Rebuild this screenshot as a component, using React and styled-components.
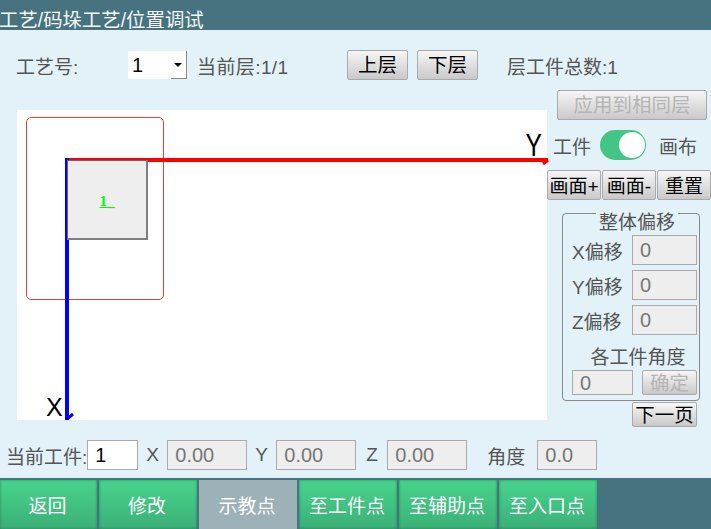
import React from "react";
import styled, { createGlobalStyle } from "styled-components";

const Global = createGlobalStyle`
  html, body { margin: 0; padding: 0; overflow: hidden; background: #e2f2f8; }
  * { box-sizing: border-box; }
  body { font-family: "Liberation Sans", "Noto Sans CJK SC", sans-serif; font-size: 19px; color: #555; }
`;

const Page = styled.div`
  width: 711px; height: 529px; display: flex; flex-direction: column; overflow: hidden;
  background: #e2f2f8;
`;
const Header = styled.header`
  height: 30px; flex: none; background: #47727f; color: #f2f7f8;
  font-size: 19.4px; line-height: 40px; text-indent: -1px; overflow: hidden; white-space: nowrap; margin-bottom: 20px;
`;
const TopRow = styled.div`
  height: 30px; flex: none; display: flex; align-items: center; padding-left: 16px; margin-bottom: 10px;
`;
const Text = styled.span`
  flex: none; white-space: nowrap; width: ${p => p.$w ? p.$w + "px" : "auto"}; margin-left: ${p => p.$ml || 0}px;
  letter-spacing: ${p => p.$ls || 0}px; color: #555;
`;
const Select = styled.div`
  width: 59px; height: 28px; background: #fff; color: #000; display: flex; justify-content: space-between;
  align-items: center; padding-left: 4px; font-size: 20px;
`;
const SelectArrow = styled.div`
  width: 16px; height: 28px; border-right: 1px solid #888; border-bottom: 1px solid #888;
  display: flex; align-items: center; justify-content: center; background: #fff;
  &::after { content: ""; border: 4px solid transparent; border-top: 4px solid #000; border-bottom: 0; margin-left: -1px; }
`;
const Btn = styled.button`
  flex: none; width: ${p => p.$w}px; height: ${p => p.$h || 30}px; margin-left: ${p => p.$ml || 0}px; padding: 2px 0 0;
  font: inherit; font-size: ${p => p.$fs || 19.5}px; line-height: 1; color: ${p => p.disabled ? "#b5b5b5" : "#000"};
  background: linear-gradient(#f6f6f6, #c9c9c9); border: 1px solid #aaa; border-radius: 2px; white-space: nowrap;
`;
const Work = styled.div`
  height: 337px; flex: none; display: flex; padding-left: 17px; margin-bottom: 13px;
`;
const Canvas = styled.div`
  position: relative; width: 530px; height: 310px; margin-top: 20px; background: #fff; flex: none;
`;
const Overlay = styled.svg`
  position: absolute; left: 0; top: 0; width: 540px; height: 310px; overflow: visible;
`;
const Range = styled.div`
  position: absolute; left: 9px; top: 7px; width: 138px; height: 183px; border: 1px solid #e8432e; border-radius: 5px;
`;
const Piece = styled.div`
  position: absolute; left: 50px; top: 50px; width: 81px; height: 80px; background: #eee; padding-top: 3px;
  border-left: 1px solid #666; border-top: 1px solid #666; border-right: 2px solid #808080; border-bottom: 2px solid #808080;
  display: flex; align-items: center; justify-content: center;
  color: #0f0; font: bold 15px "Liberation Serif", serif; text-decoration: underline;
`;
const Side = styled.aside`
  width: 164px; flex: none; display: flex; flex-direction: column;
`;
const SwitchRow = styled.div`
  height: 30px; margin: 10px 0; display: flex; align-items: center; padding-left: 6px;
`;
const Toggle = styled.div`
  width: 46px; height: 30px; border-radius: 15px; background: #43c585; margin: 0 13px 0 9px; padding: 2px 1px;
  display: flex; justify-content: flex-end;
  &::after { content: ""; width: 26px; height: 26px; border-radius: 50%; background: #fff; }
`;
const ViewRow = styled.div`
  display: flex; gap: 1px; height: 30px;
`;
const Group = styled.section`
  position: relative; flex: none; margin: 13px 0 0 15px; padding: 21px 2px 0 9px; width: 138px; height: 188px;
  border: 1px solid #888; border-radius: 4px; display: flex; flex-direction: column;
`;
const Legend = styled.div`
  position: absolute; left: 33px; top: -1px; padding: 0 3px; height: 19px; line-height: 19px;
  background: #e2f2f8; color: #555; white-space: nowrap;
`;
const OffsetRow = styled.div`
  display: flex; justify-content: space-between; align-items: center; height: 30px; margin-bottom: 5px;
`;
const Field = styled.div`
  flex: none; width: ${p => p.$w}px; height: ${p => p.$h || 30}px; background: ${p => p.$white ? "#fff" : "#eee"};
  border: 1px solid #aaa; color: ${p => p.$white ? "#000" : "#777"}; display: flex; align-items: center;
  padding: 1px 0 0 7px; font-size: 20px;
`;
const AngleTitle = styled.div`
  text-align: center; height: 25px; line-height: 25px; padding-left: 7px; margin-top: 5px;
`;
const AngleRow = styled.div`
  display: flex; justify-content: space-between;
`;
const NextWrap = styled.div`
  padding-left: 85px; margin-top: 1px;
`;
const PosRow = styled.div`
  height: 30px; flex: none; display: flex; align-items: center; padding-left: 6px; margin-bottom: 8px;
`;
const Footer = styled.footer`
  flex: 1; background: #47727f; padding-top: 2px; display: flex; gap: 2px;
`;
const NavBtn = styled.button`
  flex: none; width: ${p => p.$w || 98}px; height: 49px; padding: 0 2px 0 0; border: 0;
  font: inherit; color: #fff;
  background: ${p => p.$active ? "#9cb1b8" : "linear-gradient(#46d58b, #3caf78)"};
  box-shadow: ${p => p.$active ? "none" : "inset 0 0 3px rgba(30,110,80,.7)"};
`;

const App = () => (
  <Page>
    <Global />
    <Header>工艺/码垛工艺/位置调试</Header>
    <TopRow>
      <Text $w={112}>工艺号:</Text>
      <Select>1<SelectArrow /></Select>
      <Text $ml={10} $w={150} $ls={0.4}>当前层:1/1</Text>
      <Btn $w={61}>上层</Btn>
      <Btn $w={61} $ml={9}>下层</Btn>
      <Text $ml={29}>层工件总数:1</Text>
    </TopRow>
    <Work>
      <Canvas>
        <Range />
        <Overlay viewBox="0 0 540 310">
          <rect x="48" y="48" width="483" height="4" fill="#f00" />
          <path d="M531 50 L526 54" stroke="#f00" strokeWidth="3" />
          <rect x="48" y="48" width="4" height="262" fill="#00f" />
          <path d="M50 309 L56 304" stroke="#00f" strokeWidth="3" />
          <text transform="translate(508.5 46) scale(.85 1.1)" fontSize="29" fontFamily="Liberation Sans" fill="#000">Y</text>
          <text x="29" y="306" fontSize="25" fontFamily="Liberation Sans" fill="#000">X</text>
        </Overlay>
        <Piece>1_</Piece>
      </Canvas>
      <Side>
        <Btn $w={150} $ml={10} disabled>应用到相同层</Btn>
        <SwitchRow>
          <Text>工件</Text>
          <Toggle />
          <Text>画布</Text>
        </SwitchRow>
        <ViewRow>
          <Btn $w={54} $fs={19}>画面+</Btn>
          <Btn $w={54} $fs={19}>画面-</Btn>
          <Btn $w={54} $fs={19}>重置</Btn>
        </ViewRow>
        <Group>
          <Legend>整体偏移</Legend>
          <OffsetRow><Text>X偏移</Text><Field $w={65}>0</Field></OffsetRow>
          <OffsetRow><Text>Y偏移</Text><Field $w={65}>0</Field></OffsetRow>
          <OffsetRow><Text>Z偏移</Text><Field $w={65}>0</Field></OffsetRow>
          <AngleTitle>各工件角度</AngleTitle>
          <AngleRow>
            <Field $w={61} $h={25}>0</Field>
            <Btn $w={55} $h={25} disabled>确定</Btn>
          </AngleRow>
        </Group>
        <NextWrap><Btn $w={65} $h={25}>下一页</Btn></NextWrap>
      </Side>
    </Work>
    <PosRow>
      <Text>当前工件:</Text>
      <Field $w={51} $white>1</Field>
      <Text $ml={8} $w={21}>X</Text>
      <Field $w={80}>0.00</Field>
      <Text $ml={8} $w={21}>Y</Text>
      <Field $w={80}>0.00</Field>
      <Text $ml={10} $w={21}>Z</Text>
      <Field $w={80}>0.00</Field>
      <Text $ml={20} $w={50}>角度</Text>
      <Field $w={60}>0.0</Field>
    </PosRow>
    <Footer>
      <NavBtn $w={97}>返回</NavBtn>
      <NavBtn>修改</NavBtn>
      <NavBtn $active>示教点</NavBtn>
      <NavBtn>至工件点</NavBtn>
      <NavBtn>至辅助点</NavBtn>
      <NavBtn>至入口点</NavBtn>
    </Footer>
  </Page>
);

export default App;
